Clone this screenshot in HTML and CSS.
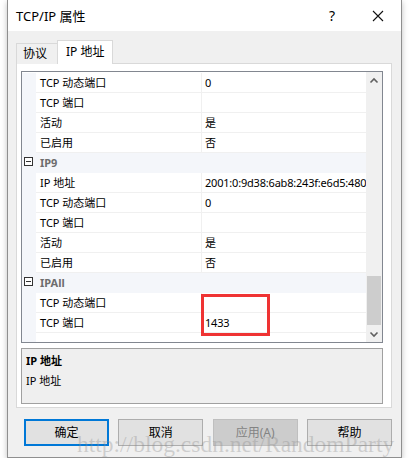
FILE: index.html
```html
<!DOCTYPE html>
<html lang="zh-CN">
<head>
    <meta charset="UTF-8">
    <title>TCP/IP 属性</title>
    <link rel="stylesheet" href="styles.css">
</head>
<body>
    <section class="dlg">
        <div class="title-bar">
            <span class="title">TCP/IP 属性</span>
            <span class="help">?</span>
            <span class="close">
                <svg width="12" height="12" viewBox="0 0 12 12"><path d="M1 1L11 11M11 1L1 11" stroke="#111" stroke-width="1.1" fill="none"/></svg>
            </span>
        </div>
        <div class="dlg-body">
            <div class="tabs">
                <span class="tab">协议</span>
                <span class="tab active">IP 地址</span>
            </div>
            <div class="panel">
                <div class="prop-grid">
                    <div class="rows">
                        <div class="row"><i></i><span class="name">TCP 动态端口</span><span class="val">0</span></div>
                        <div class="row"><i></i><span class="name">TCP 端口</span><span class="val"></span></div>
                        <div class="row"><i></i><span class="name">活动</span><span class="val">是</span></div>
                        <div class="row"><i></i><span class="name">已启用</span><span class="val">否</span></div>
                        <div class="row cat"><i><b class="minus"></b></i><span class="name">IP9</span></div>
                        <div class="row"><i></i><span class="name">IP 地址</span><span class="val">2001:0:9d38:6ab8:243f:e6d5:4809</span></div>
                        <div class="row"><i></i><span class="name">TCP 动态端口</span><span class="val">0</span></div>
                        <div class="row"><i></i><span class="name">TCP 端口</span><span class="val"></span></div>
                        <div class="row"><i></i><span class="name">活动</span><span class="val">是</span></div>
                        <div class="row"><i></i><span class="name">已启用</span><span class="val">否</span></div>
                        <div class="row cat"><i><b class="minus"></b></i><span class="name">IPAll</span></div>
                        <div class="row"><i></i><span class="name">TCP 动态端口</span><span class="val"></span></div>
                        <div class="row"><i></i><span class="name">TCP 端口</span><span class="val">1433</span></div>
                        <div class="row-fill"><i></i></div>
                    </div>
                    <div class="scrollbar">
                        <svg class="arrow" width="16" height="16" viewBox="0 0 16 16"><path d="M4.5 9.5L8 6L11.5 9.5" stroke="#606060" stroke-width="1.6" fill="none"/></svg>
                        <div class="track"><div class="thumb"></div></div>
                        <svg class="arrow" width="16" height="16" viewBox="0 0 16 16"><path d="M4.5 6.5L8 10L11.5 6.5" stroke="#606060" stroke-width="1.6" fill="none"/></svg>
                    </div>
                </div>
                <div class="desc">
                    <b>IP 地址</b>
                    <p>IP 地址</p>
                </div>
            </div>
            <div class="btns">
                <span class="btn default">确定</span>
                <span class="btn">取消</span>
                <span class="btn disabled">应用(A)</span>
                <span class="btn">帮助</span>
            </div>
        </div>
        <div class="mark"></div>
        <div class="watermark">http://blog.csdn.net/RandomParty</div>
    </section>
</body>
</html>
```

FILE: styles.css
```css
*{
    margin: 0;
    padding: 0;
    box-sizing: border-box;
}
html{
    font-size: 12px;
    font-family: "Noto Sans", "Noto Sans CJK SC", sans-serif;
    color: #000;
}
body{
    background: #fff;
}
.dlg{
    position: relative;
    margin-left: 7px;
    width: 395px;
    height: 458px;
    border: 1px solid #8f8f8f;
    border-top: none;
    background: #f0f0f0;
    box-shadow: 0 2px 6px rgba(0,0,0,0.25);
}
.title-bar{
    display: flex;
    align-items: center;
    height: 31px;
    background: #fff;
    padding-left: 8px;
}
.title-bar .title{
    flex: 1;
    font-size: 13px;
}
.title-bar .help{
    width: 46px;
    text-align: center;
    font-size: 14px;
}
.title-bar .close{
    width: 46px;
    display: flex;
    justify-content: center;
}

/* tabs */
.dlg-body{
    padding: 10px 9px 0 8px;
}
.tabs{
    display: flex;
    align-items: flex-end;
    height: 23px;
    margin-bottom: -1px;
    position: relative;
    z-index: 1;
}
.tab{
    height: 21px;
    line-height: 19px;
    padding: 0 10px 0 6px;
    border: 1px solid #d9d9d9;
    border-bottom: none;
    border-right: none;
    background: #f0f0f0;
}
.tab.active{
    height: 24px;
    line-height: 22px;
    padding: 0 8px;
    background: #fff;
    border-right: 1px solid #d9d9d9;
}
.panel{
    height: 345px;
    border: 1px solid #d9d9d9;
    background: #fff;
    padding: 7px 8px 0 4px;
}

/* property grid */
.prop-grid{
    display: flex;
    height: 272px;
    border: 1px solid #828790;
    font-size: 11px;
}
.rows{
    flex: 1;
    display: flex;
    flex-direction: column;
    padding-top: 1px;
    overflow: hidden;
}
.row{
    display: grid;
    grid-template-columns: 14px 165px 1fr;
    height: 20px;
    line-height: 19px;
    flex: none;
}
.row i, .row-fill i{
    display: block;
    background: #f4f6fa;
}
.row .name{
    padding-left: 4px;
    border-bottom: 1px solid #f0f0f0;
    white-space: nowrap;
}
.row .val{
    padding-left: 3px;
    border-left: 1px solid #f0f0f0;
    border-bottom: 1px solid #f0f0f0;
    white-space: nowrap;
    overflow: hidden;
    letter-spacing: -0.2px;
}
.row.cat{
    background: #f4f6fa;
}
.row.cat .name{
    grid-column: 2 / 4;
    font-weight: bold;
    color: #6d6d6d;
    border-bottom: none;
}
.row.cat i{
    position: relative;
}
.minus{
    position: absolute;
    left: 2px;
    top: 4px;
    width: 9px;
    height: 9px;
    border: 1px solid #333;
    background: #fff;
}
.minus::after{
    content: "";
    position: absolute;
    left: 1px;
    top: 3px;
    width: 5px;
    height: 1px;
    background: #333;
}
.row-fill{
    flex: 1;
    display: grid;
    grid-template-columns: 14px 1fr;
}
.scrollbar{
    width: 16px;
    background: #f0f0f0;
    display: flex;
    flex-direction: column;
    align-items: center;
}
.scrollbar .arrow{
    flex: none;
    margin-top: 1px;
}
.scrollbar .track{
    flex: 1;
    width: 100%;
    position: relative;
}
.scrollbar .thumb{
    position: absolute;
    left: 1px;
    right: 1px;
    bottom: 0;
    height: 49px;
    background: #cdcdcd;
}

/* description box */
.desc{
    margin-top: 5px;
    height: 56px;
    border: 1px solid #a0a0a0;
    background: #efefef;
    padding: 2px 4px;
    font-size: 11px;
    line-height: 20px;
}
.desc b{
    display: block;
}

/* buttons */
.btns{
    display: flex;
    gap: 9.5px;
    padding: 11px 0 0 8px;
}
.btn{
    width: 86px;
    height: 27px;
    line-height: 25px;
    text-align: center;
    background: #e1e1e1;
    border: 1px solid #adadad;
}
.btn.default{
    border: 2px solid #0078d7;
    line-height: 23px;
}
.btn.disabled{
    background: #cccccc;
    border-color: #bfbfbf;
    color: #838383;
}

/* highlight box drawn over the port value */
.mark{
    position: absolute;
    left: 193px;
    top: 294px;
    width: 69px;
    height: 42px;
    border: 3px solid #ef3333;
}
.watermark{
    position: absolute;
    left: 69px;
    top: 431px;
    font-family: "Liberation Serif", serif;
    font-size: 23.5px;
    color: rgba(140,140,140,0.35);
    white-space: nowrap;
    pointer-events: none;
}
```
